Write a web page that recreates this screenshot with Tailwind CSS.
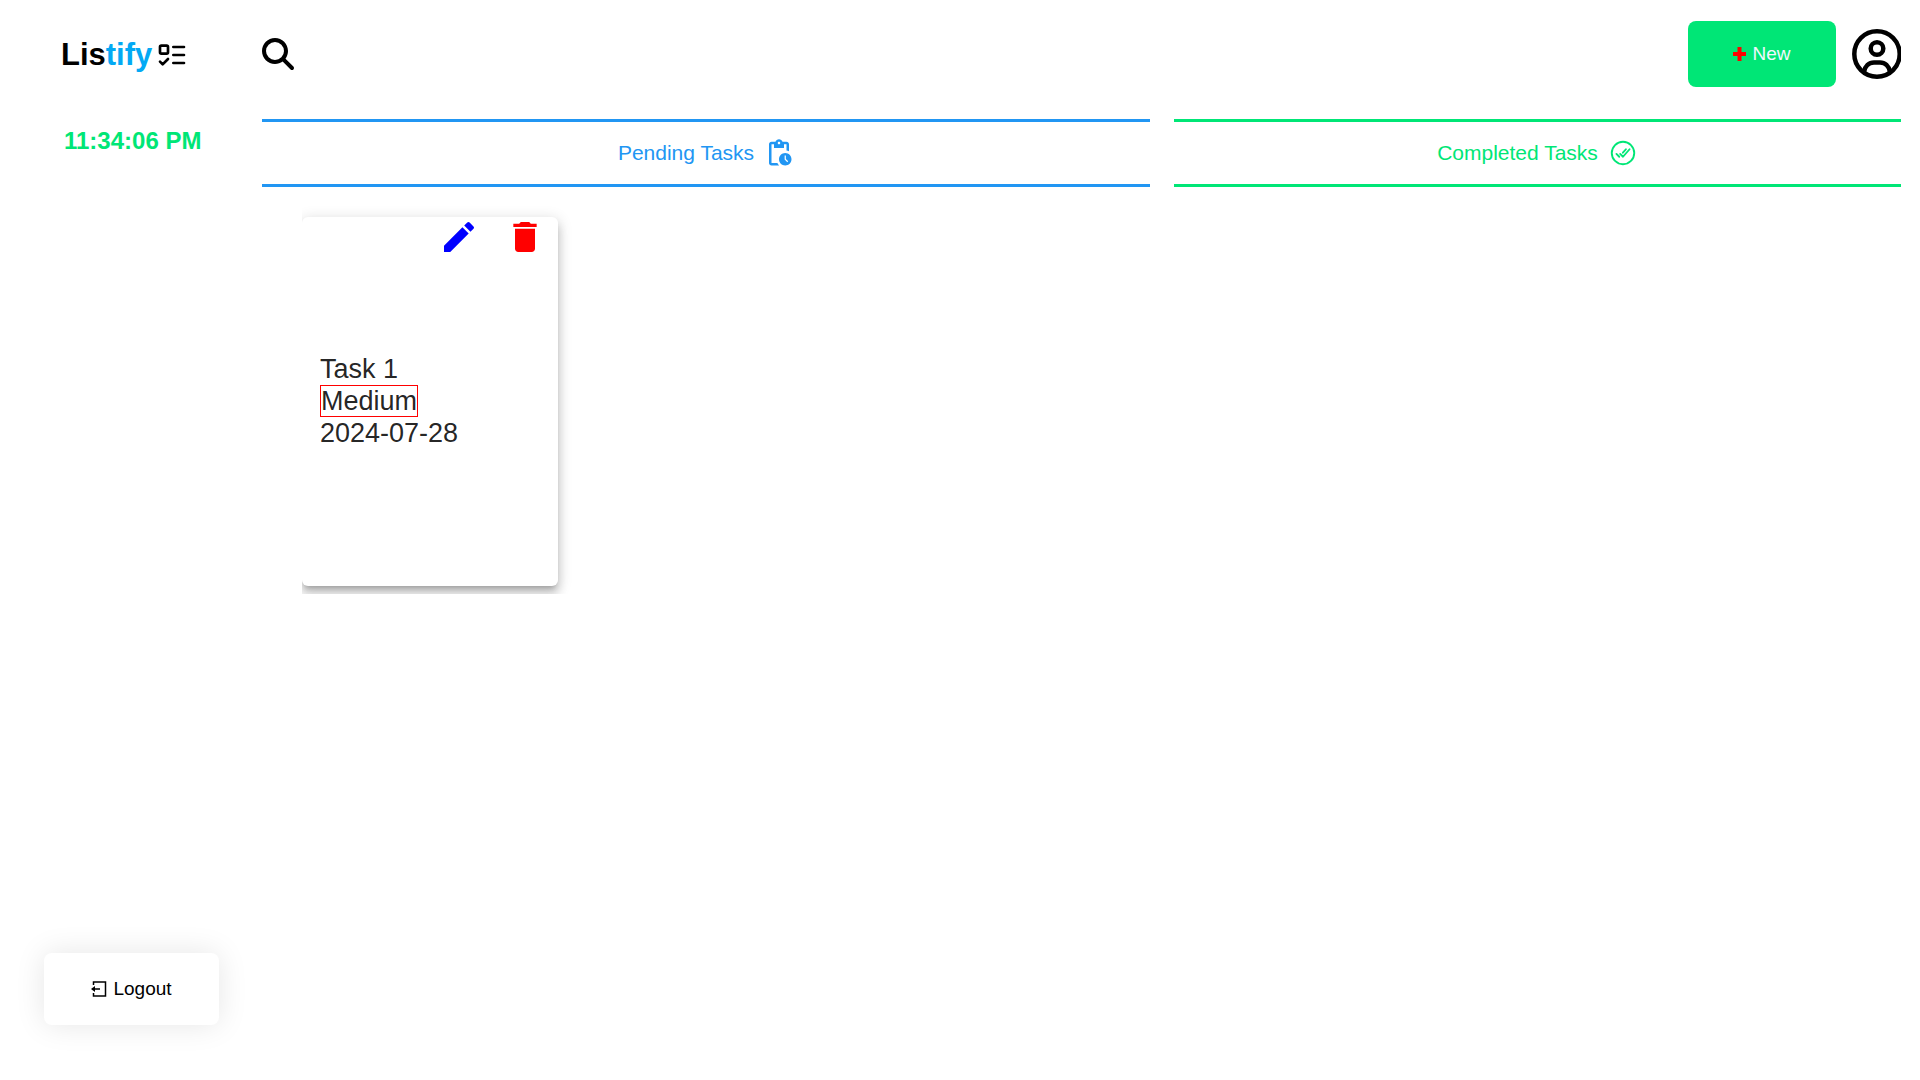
<!DOCTYPE html>
<html lang="en">
<head>
<meta charset="utf-8">
<title>Listify</title>
<script src="https://cdn.jsdelivr.net/npm/@tailwindcss/browser@4"></script>
</head>
<body class="flex min-h-screen bg-white font-['Liberation_Sans',Arial,sans-serif] text-black">
  <aside class="flex w-[262px] shrink-0 flex-col pb-[55px]">
    <div class="flex h-[110px] items-center gap-1 pl-[61px]">
      <h1 class="text-[31px] font-bold">Lis<span class="text-[#03a9f4]">tify</span></h1>
      <svg class="size-8" viewBox="0 0 24 24" fill="none" stroke="currentColor" stroke-width="2" stroke-linecap="round" stroke-linejoin="round"><rect x="3" y="5" width="6" height="6" rx="1"/><path d="m3 17 2 2 4-4M13 6h8M13 12h8M13 18h8"/></svg>
    </div>
    <time class="mt-[15px] pl-16 text-2xl font-bold text-[#00e676]">11:34:06 PM</time>
    <button class="mt-auto ml-11 flex h-[72px] w-[175px] items-center justify-center gap-1.5 rounded-lg text-[19px] shadow-[0_0_30px_rgba(0,0,0,0.1)]">
      <svg class="size-4" viewBox="0 0 16 16" fill="none" stroke="currentColor" stroke-width="1.5"><path d="M2.500 4V1h12v14h-12v-3M9 8H2"/><path d="M0 8l4-3v6z" fill="currentColor" stroke="none"/></svg>
      Logout
    </button>
  </aside>

  <div class="min-w-0 flex-1 pr-[19px]">
    <header class="flex h-[108px] items-center gap-4">
      <button aria-label="Search" class="mr-auto">
        <svg class="size-8" viewBox="0 0 512 512" fill="currentColor"><path d="M416 208c0 45.900-14.900 88.300-40 122.700L502.600 457.400c12.500 12.500 12.500 32.800 0 45.300s-32.800 12.500-45.300 0L330.700 376c-34.400 25.200-76.800 40-122.700 40C93.100 416 0 322.900 0 208S93.100 0 208 0S416 93.100 416 208zM208 352a144 144 0 1 0 0-288 144 144 0 1 0 0 288z"/></svg>
      </button>
      <button class="flex h-[66px] w-[148px] items-center justify-center gap-1.5 rounded-lg bg-[#00e676] text-[19px] text-[#f0f8ff]">
        <svg class="h-3.5 w-[13px] text-[#ff0000]" viewBox="0 0 13 14" fill="currentColor"><path d="M4.500 0h4v5H13v4H8.500v5h-4V9H0V5h4.500z"/></svg>
        New
      </button>
      <button aria-label="Profile">
        <svg class="h-[50px] w-[49px]" viewBox="0 0 49 50" fill="none" stroke="currentColor" stroke-width="4.500"><circle cx="25" cy="25" r="22.700"/><circle cx="25" cy="19.500" r="6.300"/><path d="M12 43c1-6 5-9.500 10-9.500h6c5 0 9 3.500 10 9.500"/></svg>
      </button>
    </header>

    <main class="grid grid-cols-[888fr_727fr] gap-6 pt-[11px]">
      <section>
        <h2 class="flex h-[68px] items-center justify-center gap-2.5 border-y-3 border-[#2196f3] text-[21px] text-[#2196f3]">
          Pending Tasks
          <svg class="size-[30px]" viewBox="0 0 24 24" fill="currentColor"><path d="M17 12c-2.760 0-5 2.240-5 5s2.240 5 5 5 5-2.240 5-5-2.240-5-5-5zm1.650 7.350L16.500 17.200V14h1v2.790l1.850 1.850-.7.71zM18 3h-3.180C14.400 1.840 13.300 1 12 1s-2.400.84-2.820 2H6c-1.100 0-2 .9-2 2v15c0 1.100.9 2 2 2h6.110a6.743 6.743 0 0 1-1.420-2H6V5h2v3h8V5h2v5.080c.71.1 1.380.31 2 .6V5c0-1.100-.9-2-2-2zm-6 2c-.55 0-1-.45-1-1s.45-1 1-1 1 .45 1 1-.45 1-1 1z"/></svg>
        </h2>
        <div class="ml-10 overflow-hidden pt-[30px] pb-2">
          <article class="flex h-[369px] w-64 flex-col rounded-md bg-white text-[27px] leading-8 text-black/87 shadow-[0_5px_5px_-3px_rgba(0,0,0,0.2),0_8px_10px_1px_rgba(0,0,0,0.14),0_3px_14px_2px_rgba(0,0,0,0.12)]">
            <div class="flex justify-end gap-[26px] pr-[13px]">
              <button aria-label="Edit task" class="text-[#0000ff]"><svg class="size-10" viewBox="0 0 24 24" fill="currentColor"><path d="M3 17.250V21h3.750L17.810 9.940l-3.750-3.750L3 17.250zM20.710 7.040a.996.996 0 0 0 0-1.410l-2.340-2.340a.996.996 0 0 0-1.410 0l-1.830 1.830 3.750 3.750 1.830-1.830z"/></svg></button>
              <button aria-label="Delete task" class="text-[#ff0000]"><svg class="size-10" viewBox="0 0 24 24" fill="currentColor"><path d="M6 19c0 1.100.9 2 2 2h8c1.100 0 2-.9 2-2V7H6v12zM19 4h-3.500l-1-1h-5l-1 1H5v2h14V4z"/></svg></button>
            </div>
            <div class="mt-24 flex flex-col items-start pl-[18px]">
              <h3>Task 1</h3>
              <p class="border border-[#ff0000] leading-[30px]">Medium</p>
              <p>2024-07-28</p>
            </div>
          </article>
        </div>
      </section>
      <section>
        <h2 class="flex h-[68px] items-center justify-center gap-2.5 border-y-3 border-[#00e676] text-[21px] text-[#00e676]">
          Completed Tasks
          <svg class="size-[30px]" viewBox="0 0 512 512" fill="none" stroke="currentColor" stroke-width="32" stroke-linecap="round" stroke-linejoin="round"><circle cx="256" cy="256" r="192"/><path d="M368 192 256 320l-48-48M192 320l-48-48M306 192l-52 59"/></svg>
        </h2>
      </section>
    </main>
  </div>
</body>
</html>
